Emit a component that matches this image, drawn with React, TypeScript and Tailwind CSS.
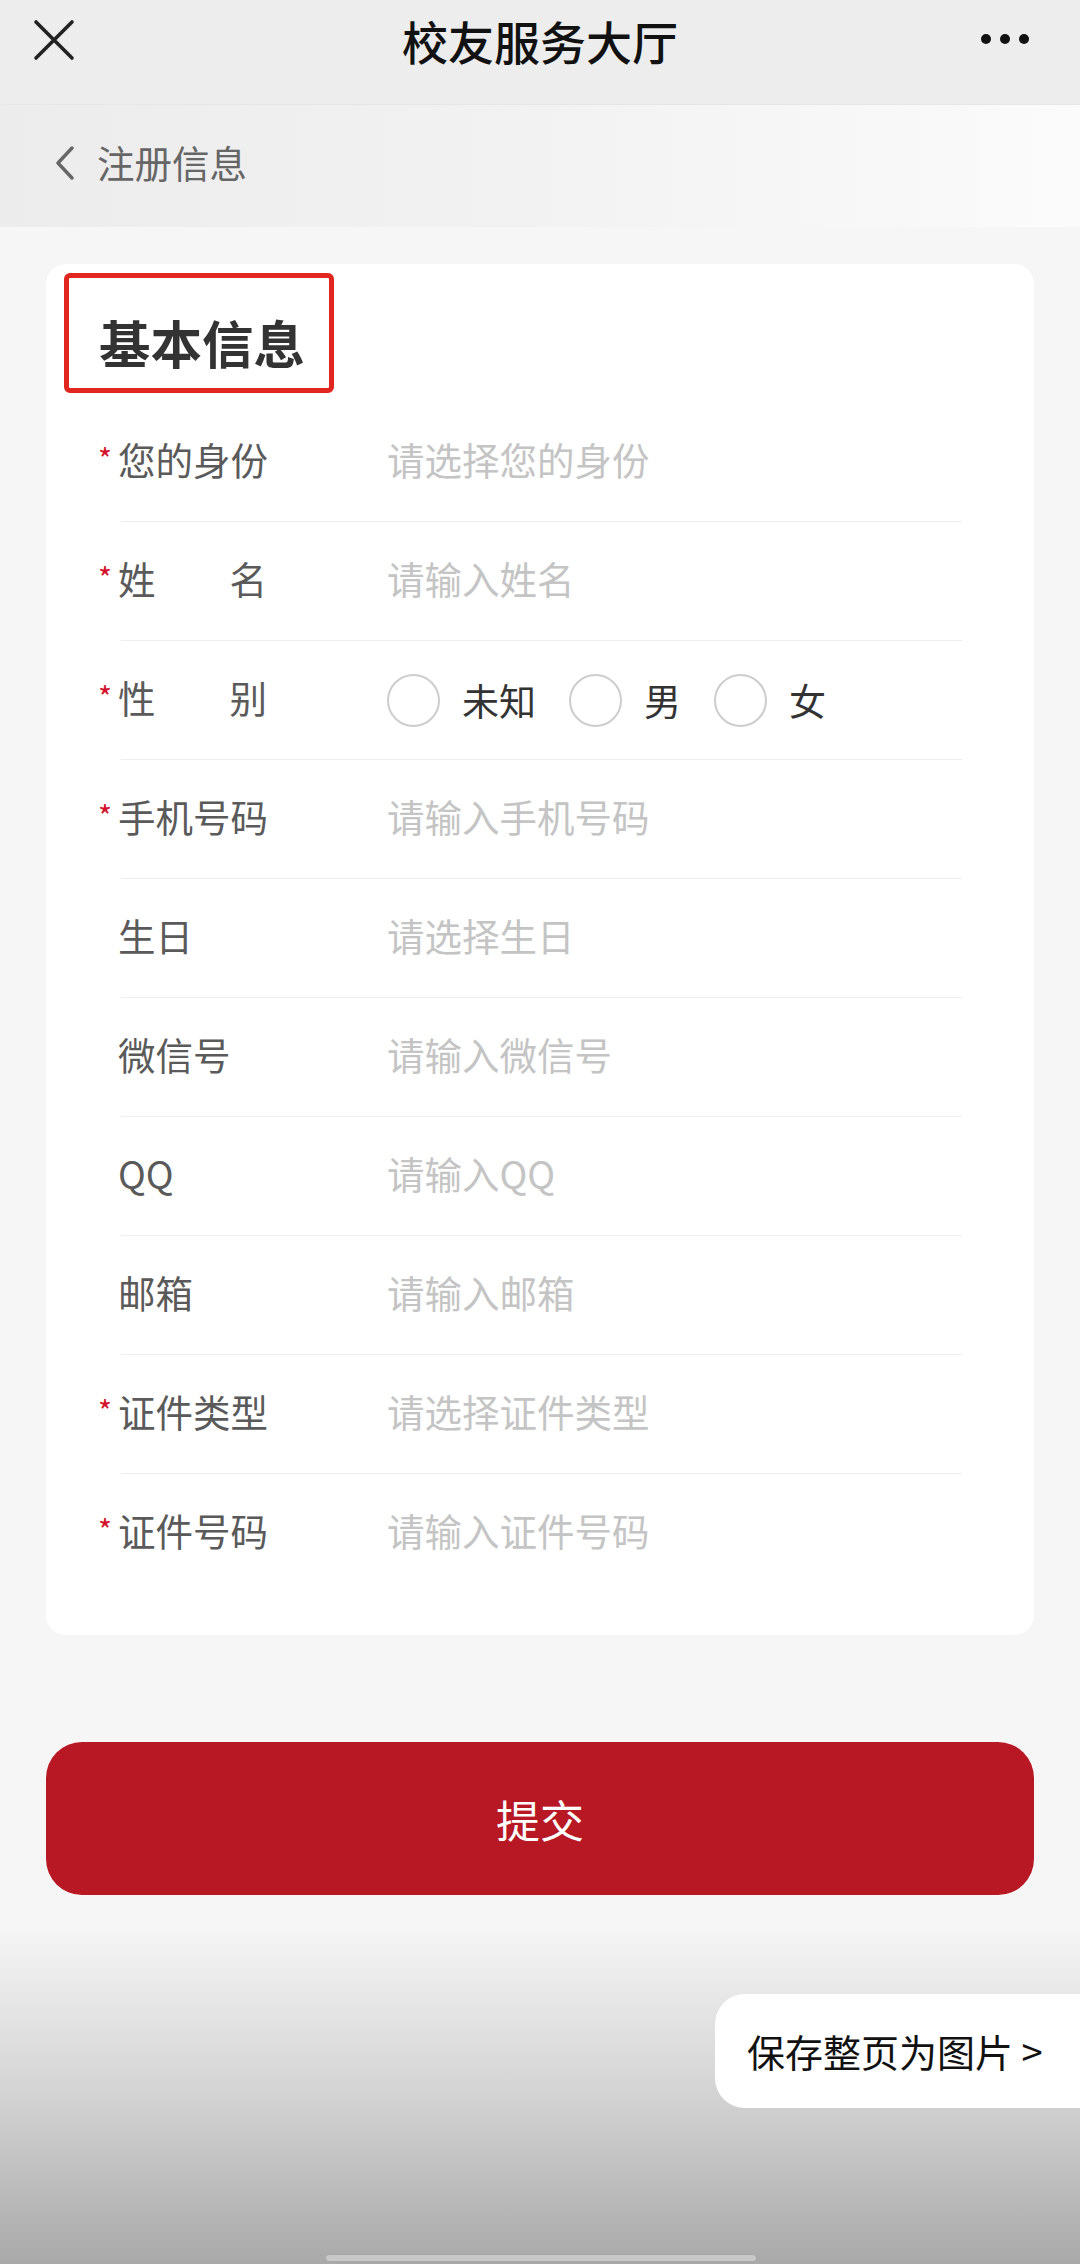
import React from "react";

const font = { fontFamily: '"Noto Sans CJK SC", "Noto Sans", sans-serif' };

type Row = { label: string; req: boolean; placeholder?: string; spread?: boolean; radio?: boolean };

const rows: Row[] = [
  { label: "您的身份", req: true, placeholder: "请选择您的身份" },
  { label: "姓名", req: true, placeholder: "请输入姓名", spread: true },
  { label: "性别", req: true, spread: true, radio: true },
  { label: "手机号码", req: true, placeholder: "请输入手机号码" },
  { label: "生日", req: false, placeholder: "请选择生日" },
  { label: "微信号", req: false, placeholder: "请输入微信号" },
  { label: "QQ", req: false, placeholder: "请输入QQ" },
  { label: "邮箱", req: false, placeholder: "请输入邮箱" },
  { label: "证件类型", req: true, placeholder: "请选择证件类型" },
  { label: "证件号码", req: true, placeholder: "请输入证件号码" },
];

function Radio({ text }: { text: string }) {
  return (
    <div className="flex items-center">
      <div className="w-[53px] h-[53px] rounded-full border-[2px] border-[#cdcdcd] bg-white" />
      <span className="ml-[22px] text-[37px] text-[#333] leading-none">{text}</span>
    </div>
  );
}

export default function App() {
  return (
    <div className="w-[1080px] h-[2264px] flex flex-col bg-[#f6f6f6] relative overflow-hidden" style={font}>
      {/* top bar */}
      <div className="h-[104px] bg-[#ededed] relative flex items-center justify-center shrink-0">
        <svg className="absolute left-[33px] top-[19px]" width="42" height="42" viewBox="0 0 42 42">
          <path d="M3 3 L39 39 M39 3 L3 39" stroke="#222" strokeWidth="3.6" strokeLinecap="round" />
        </svg>
        <span className="text-[46px] font-medium text-[#111] leading-none -mt-[24px]">校友服务大厅</span>
        <svg className="absolute left-[975px] top-[33px]" width="60" height="14" viewBox="0 0 60 14">
          <circle cx="11" cy="6" r="5" fill="#111" />
          <circle cx="30" cy="6" r="5" fill="#111" />
          <circle cx="49" cy="6" r="5" fill="#111" />
        </svg>
      </div>

      {/* sub bar */}
      <div className="h-[123px] shrink-0 flex items-center border-t border-[#e6e6e6] bg-gradient-to-r from-[#ececec] via-[#f2f2f2] to-[#fbfbfb]">
        <svg className="ml-[55px] -mt-[6px]" width="20" height="34" viewBox="0 0 20 34">
          <path d="M17 2 L3 17 L17 32" stroke="#666" strokeWidth="3.4" fill="none" strokeLinecap="round" strokeLinejoin="round" />
        </svg>
        <span className="ml-[22px] text-[37.5px] text-[#666] leading-none -mt-[8px]">注册信息</span>
      </div>

      {/* main */}
      <div className="px-[46px] pt-[37px] shrink-0">
        <div className="bg-white rounded-[20px] pt-[9px] pb-[43px]">
          <div className="ml-[18px] w-[270px] h-[120px] border-[5px] border-[#e1261f] rounded-[6px] flex items-center pl-[30px]">
            <span className="text-[51.5px] font-bold text-[#333] leading-none mt-[18px]">基本信息</span>
          </div>
          <div className="mt-[10px]">
            {rows.map((r, i) => (
              <div key={i}>
                <div className="h-[118px] flex items-center">
                  <div className="w-[20px] ml-[52px] self-start mt-[40px] text-[#d3122c] text-[30px] leading-none">
                    {r.req ? "*" : ""}
                  </div>
                  <div
                    className={
                      "w-[149px] text-[37.5px] text-[#5a5a5a] leading-none flex -mt-[6px] " +
                      (r.spread ? "justify-between" : "")
                    }
                  >
                    {r.spread ? (
                      <>
                        <span>{r.label[0]}</span>
                        <span>{r.label[1]}</span>
                      </>
                    ) : (
                      <span className="whitespace-nowrap">{r.label}</span>
                    )}
                  </div>
                  <div className="ml-[120px] flex items-center">
                    {r.radio ? (
                      <div className="flex items-center gap-[33px]">
                        <Radio text="未知" />
                        <Radio text="男" />
                        <Radio text="女" />
                      </div>
                    ) : (
                      <span className="text-[37.5px] text-[#c4c4c4] leading-none -mt-[6px] whitespace-nowrap">{r.placeholder}</span>
                    )}
                  </div>
                </div>
                {i < rows.length - 1 && <div className="h-px bg-[#eeeeee] ml-[75px] mr-[72px]" />}
              </div>
            ))}
          </div>
        </div>

        <div className="mt-[107px] h-[153px] rounded-[36px] bg-[#b81724] flex items-center justify-center">
          <span className="text-[44px] text-white leading-none">提交</span>
        </div>
      </div>

      {/* bottom overlay gradient */}
      <div className="flex-1 mt-[30px] bg-gradient-to-b from-[#f6f6f6] via-[#d3d3d3] to-[#a9a9a9] relative">
        <div className="absolute right-0 top-[69px] w-[365px] h-[114px] bg-white rounded-l-[30px] flex items-center pl-[32px]">
          <span className="text-[38px] text-[#111] leading-none whitespace-nowrap">保存整页为图片 &gt;</span>
        </div>
        <div className="absolute left-[325px] bottom-[2px] w-[432px] h-[8px] rounded-full bg-[#c8c8c8] border border-[#a8a8a8]" />
      </div>
    </div>
  );
}
